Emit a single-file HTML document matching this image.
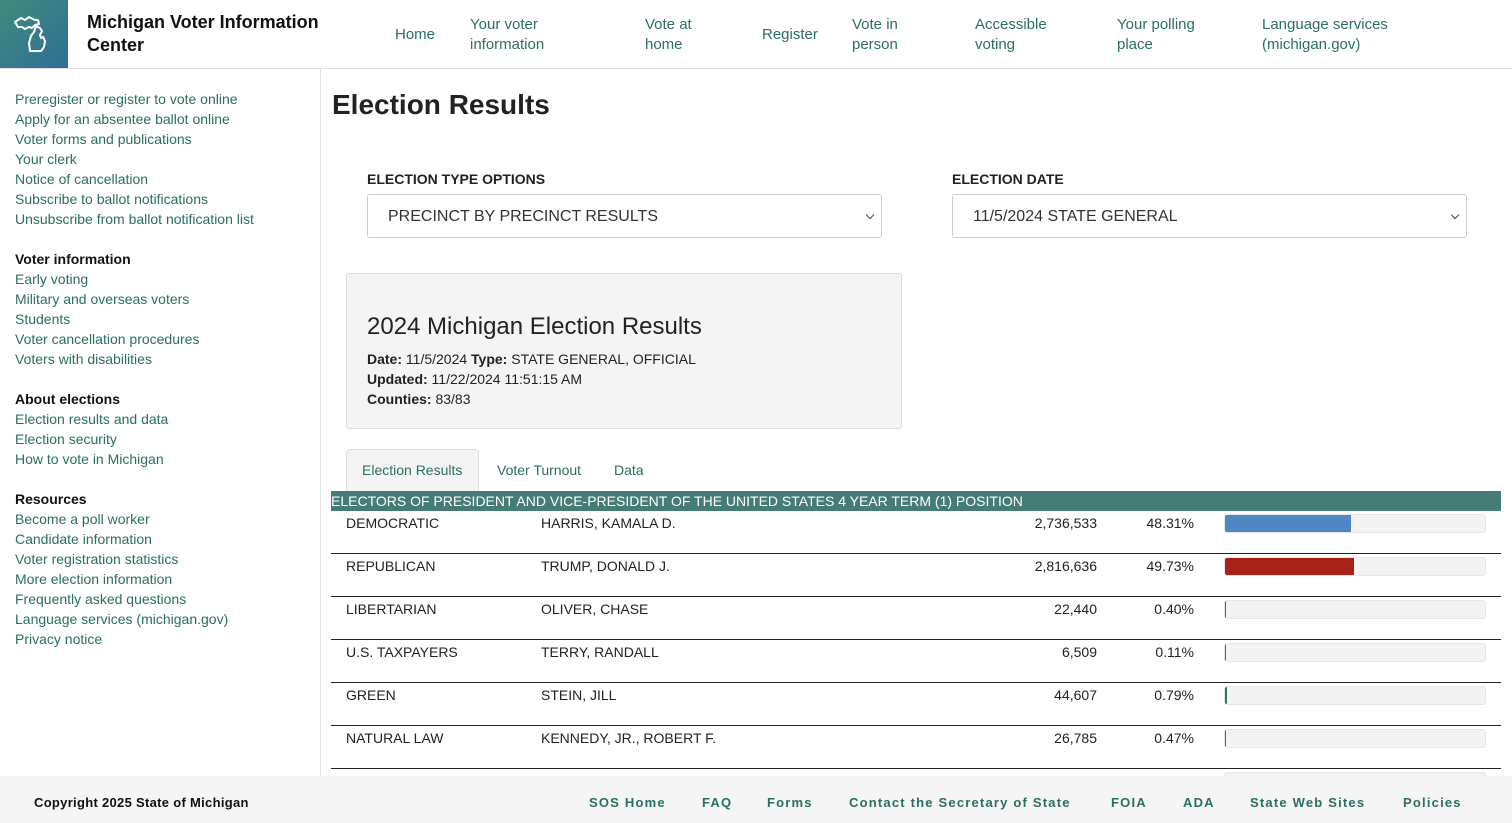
<!DOCTYPE html><html><head><style>
*{box-sizing:border-box;margin:0;padding:0}
body{width:1512px;height:823px;overflow:hidden;font-family:"Liberation Sans",sans-serif;background:#fff;position:relative;color:#222}
.hdr{position:absolute;left:0;top:0;width:1512px;height:69px;border-bottom:1px solid #e2e2e2}
.logo{position:absolute;left:0;top:0;width:68px;height:68px;background:linear-gradient(135deg,#3f8b7b,#2f6f97)}
.title{position:absolute;left:87px;top:11px;font-size:18px;font-weight:bold;line-height:23px;color:#111}
.nav a{position:absolute;font-size:15px;color:#2a6f62;line-height:20px;text-decoration:none}
.side{position:absolute;left:0;top:69px;width:321px;height:707px;border-right:1px solid #e2e2e2}
.side div{position:absolute;left:15px;font-size:14px;color:#2a6f62}
.side b{position:absolute;left:15px;font-size:14px;color:#111}
.a{position:absolute;white-space:nowrap}
.sel{position:absolute;height:44px;border:1px solid #ccc;border-radius:3px;font-size:16px;padding:13px 20px;color:#333}
.sel:after{content:"";position:absolute;right:8px;top:17px;width:5px;height:5px;border-right:1.5px solid #444;border-bottom:1.5px solid #444;transform:rotate(45deg)}
.row{position:absolute;left:331px;width:1170px;height:43px;border-bottom:1px solid #222;font-size:14px;color:#222}
.row span{position:absolute}
.bar{position:absolute;left:893px;top:3px;width:262px;height:19px;background:#f3f3f3;border:1px solid #e6e6e6;border-radius:3px;overflow:hidden}
.bar i{display:block;height:100%}
.ft{position:absolute;left:0;top:776px;width:1512px;height:47px;background:#f5f5f5}
.ft span{position:absolute;top:19px;font-size:13px;font-weight:bold;letter-spacing:1.2px;color:#2a6f62}
</style></head><body>
<div class="hdr">
<div class="logo"><svg width="68" height="68" viewBox="0 0 68 68"><path d="M15 22 l6-4 4 2 4-3 6 3 3 0 1 4-4 1-3 3 -3-1-4 2-3-2-4 0z M36 26 l4 2 2 3-2 4 1 3 2-1 2 4-1 6-3 4h-11l-1-8 2-7 3-4z" fill="none" stroke="#fff" stroke-width="2" stroke-linejoin="round"/></svg></div>
<div class="title">Michigan Voter Information<br>Center</div>
<div class="nav">
<a style="left:395px;top:25px">Home</a>
<a style="left:470px;top:15px">Your voter<br>information</a>
<a style="left:645px;top:15px">Vote at<br>home</a>
<a style="left:762px;top:25px">Register</a>
<a style="left:852px;top:15px">Vote in<br>person</a>
<a style="left:975px;top:15px">Accessible<br>voting</a>
<a style="left:1117px;top:15px">Your polling<br>place</a>
<a style="left:1262px;top:15px">Language services<br>(michigan.gov)</a>
</div></div>
<div class="side">
<div style="top:22px">Preregister or register to vote online</div>
<div style="top:42px">Apply for an absentee ballot online</div>
<div style="top:62px">Voter forms and publications</div>
<div style="top:82px">Your clerk</div>
<div style="top:102px">Notice of cancellation</div>
<div style="top:122px">Subscribe to ballot notifications</div>
<div style="top:142px">Unsubscribe from ballot notification list</div>
<b style="top:182px">Voter information</b>
<div style="top:202px">Early voting</div>
<div style="top:222px">Military and overseas voters</div>
<div style="top:242px">Students</div>
<div style="top:262px">Voter cancellation procedures</div>
<div style="top:282px">Voters with disabilities</div>
<b style="top:322px">About elections</b>
<div style="top:342px">Election results and data</div>
<div style="top:362px">Election security</div>
<div style="top:382px">How to vote in Michigan</div>
<b style="top:422px">Resources</b>
<div style="top:442px">Become a poll worker</div>
<div style="top:462px">Candidate information</div>
<div style="top:482px">Voter registration statistics</div>
<div style="top:502px">More election information</div>
<div style="top:522px">Frequently asked questions</div>
<div style="top:542px">Language services (michigan.gov)</div>
<div style="top:562px">Privacy notice</div>
</div>
<div class="a" style="left:332px;top:89px;font-size:28px;font-weight:bold;color:#222">Election Results</div>
<div class="a" style="left:367px;top:171px;font-size:14px;font-weight:bold">ELECTION TYPE OPTIONS</div>
<div class="a" style="left:952px;top:171px;font-size:14px;font-weight:bold">ELECTION DATE</div>
<div class="sel" style="left:367px;top:194px;width:515px">PRECINCT BY PRECINCT RESULTS</div>
<div class="sel" style="left:952px;top:194px;width:515px">11/5/2024 STATE GENERAL</div>
<div style="position:absolute;left:346px;top:273px;width:556px;height:156px;background:#f4f4f4;border:1px solid #ddd;border-radius:3px">
<div class="a" style="left:20px;top:39px;font-size:24px;color:#222">2024 Michigan Election Results</div>
<div class="a" style="left:20px;top:75px;font-size:14px;line-height:20px"><b>Date:</b> 11/5/2024 <b>Type:</b> STATE GENERAL, OFFICIAL<br><b>Updated:</b> 11/22/2024 11:51:15 AM<br><b>Counties:</b> 83/83</div>
</div>
<div style="position:absolute;left:346px;top:449px;width:133px;height:42px;background:#f4f4f4;border:1px solid #ddd;border-bottom:none;border-radius:4px 4px 0 0"></div>
<div class="a" style="left:362px;top:462px;font-size:14px;color:#2a6f62">Election Results</div>
<div class="a" style="left:497px;top:462px;font-size:14px;color:#2a6f62">Voter Turnout</div>
<div class="a" style="left:614px;top:462px;font-size:14px;color:#2a6f62">Data</div>
<div style="position:absolute;left:331px;top:491px;width:1170px;height:20px;background:#457c76;color:#fff;font-size:14px;line-height:20px;white-space:nowrap">ELECTORS OF PRESIDENT AND VICE-PRESIDENT OF THE UNITED STATES 4 YEAR TERM (1) POSITION</div>
<div class="row" style="top:511px"><span style="left:15px;top:4px">DEMOCRATIC</span><span style="left:210px;top:4px">HARRIS, KAMALA D.</span><span style="right:404px;top:4px">2,736,533</span><span style="right:307px;top:4px">48.31%</span><div class="bar"><i style="width:48.3%;background:#4f87c6"></i></div></div>
<div class="row" style="top:554px"><span style="left:15px;top:4px">REPUBLICAN</span><span style="left:210px;top:4px">TRUMP, DONALD J.</span><span style="right:404px;top:4px">2,816,636</span><span style="right:307px;top:4px">49.73%</span><div class="bar"><i style="width:49.7%;background:#a82219"></i></div></div>
<div class="row" style="top:597px"><span style="left:15px;top:4px">LIBERTARIAN</span><span style="left:210px;top:4px">OLIVER, CHASE</span><span style="right:404px;top:4px">22,440</span><span style="right:307px;top:4px">0.40%</span><div class="bar"><i style="width:0.5%;background:#2a7a5a"></i></div></div>
<div class="row" style="top:640px"><span style="left:15px;top:4px">U.S. TAXPAYERS</span><span style="left:210px;top:4px">TERRY, RANDALL</span><span style="right:404px;top:4px">6,509</span><span style="right:307px;top:4px">0.11%</span><div class="bar"><i style="width:0.3%;background:#2a7a5a"></i></div></div>
<div class="row" style="top:683px"><span style="left:15px;top:4px">GREEN</span><span style="left:210px;top:4px">STEIN, JILL</span><span style="right:404px;top:4px">44,607</span><span style="right:307px;top:4px">0.79%</span><div class="bar"><i style="width:0.8%;background:#2a7a5a"></i></div></div>
<div class="row" style="top:726px"><span style="left:15px;top:4px">NATURAL LAW</span><span style="left:210px;top:4px">KENNEDY, JR., ROBERT F.</span><span style="right:404px;top:4px">26,785</span><span style="right:307px;top:4px">0.47%</span><div class="bar"><i style="width:0.5%;background:#2a7a5a"></i></div></div>
<div class="row" style="top:769px"><div class="bar"></div></div>
<div class="ft">
<span style="left:34px;color:#111;letter-spacing:0.3px">Copyright 2025 State of Michigan</span>
<span style="left:589px">SOS Home</span><span style="left:702px">FAQ</span><span style="left:767px">Forms</span><span style="left:849px">Contact the Secretary of State</span><span style="left:1111px">FOIA</span><span style="left:1183px">ADA</span><span style="left:1250px">State Web Sites</span><span style="left:1403px">Policies</span>
</div>
</body></html>
